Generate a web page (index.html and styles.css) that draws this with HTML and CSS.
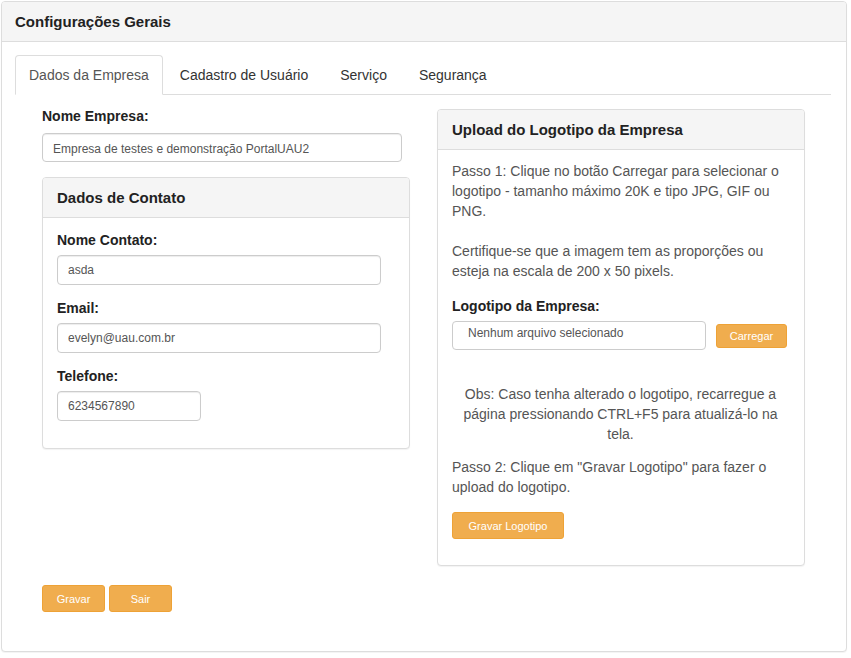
FILE: index.html
```html
<!DOCTYPE html>
<html lang="pt-BR">
<head>
<meta charset="utf-8">
<title>Configurações Gerais</title>
<link rel="stylesheet" href="styles.css">
</head>
<body>
<section class="panel main">
  <header class="panel-heading main-heading">
    <h1 class="panel-title">Configurações Gerais</h1>
  </header>
  <div class="main-body">
    <ul class="tabs">
      <li class="tab tab-active">Dados da Empresa</li>
      <li class="tab">Cadastro de Usuário</li>
      <li class="tab">Serviço</li>
      <li class="tab">Segurança</li>
    </ul>
    <div class="tab-content">
      <div class="columns">
        <div class="col">
          <label class="label">Nome Empresa:</label>
          <input class="field field-empresa" type="text" value="Empresa de testes e demonstração PortalUAU2">
          <section class="panel contato">
            <header class="panel-heading">
              <h2 class="panel-title">Dados de Contato</h2>
            </header>
            <div class="panel-body contato-body">
              <div class="form-group">
                <label class="label label-sm">Nome Contato:</label>
                <input class="field field-contato" type="text" value="asda">
              </div>
              <div class="form-group">
                <label class="label label-sm">Email:</label>
                <input class="field field-contato" type="text" value="evelyn@uau.com.br">
              </div>
              <div class="form-group">
                <label class="label label-sm">Telefone:</label>
                <input class="field field-fone" type="text" value="6234567890">
              </div>
            </div>
          </section>
        </div>
        <div class="col">
          <section class="panel upload">
            <header class="panel-heading">
              <h2 class="panel-title">Upload do Logotipo da Empresa</h2>
            </header>
            <div class="panel-body upload-body">
              <p class="text step1">Passo 1: Clique no botão Carregar para selecionar o logotipo - tamanho máximo 20K e tipo JPG, GIF ou PNG.<br><br>Certifique-se que a imagem tem as proporções ou esteja na escala de 200 x 50 pixels.</p>
              <label class="label label-sm">Logotipo da Empresa:</label>
              <div class="file-row">
                <div class="file-field">Nenhum arquivo selecionado</div>
                <button class="btn btn-carregar" type="button">Carregar</button>
              </div>
              <p class="text obs">Obs: Caso tenha alterado o logotipo, recarregue a página pressionando CTRL+F5 para atualizá-lo na tela.</p>
              <p class="text step2">Passo 2: Clique em "Gravar Logotipo" para fazer o upload do logotipo.</p>
              <button class="btn btn-logo" type="button">Gravar Logotipo</button>
            </div>
          </section>
        </div>
      </div>
      <div class="actions">
        <button class="btn btn-action" type="button">Gravar</button>
        <button class="btn btn-action" type="button">Sair</button>
      </div>
    </div>
  </div>
</section>
</body>
</html>
```
FILE: styles.css
```css
* {
  box-sizing: border-box;
}

body {
  margin: 0;
  padding: 1px;
  font-family: "Liberation Sans", Arial, sans-serif;
  font-size: 14px;
  line-height: 20px;
  color: #333;
  background: #fff;
}

.panel {
  background: #fff;
  border: 1px solid #ddd;
  border-radius: 4px;
  box-shadow: 0 1px 1px rgba(0, 0, 0, 0.05);
}

.main {
  width: 846px;
}

.panel-heading {
  background: #f5f5f5;
  border-bottom: 1px solid #ddd;
  border-radius: 3px 3px 0 0;
  padding: 10px 15px 9px 14px;
}

.main-heading {
  padding-left: 13px;
}

.panel-title {
  margin: 0;
  font-size: 15px;
  font-weight: bold;
  line-height: 20px;
  color: #222;
}

.main-body {
  padding: 13px 15px 39px 13px;
}

.tabs {
  display: flex;
  list-style: none;
  margin: 0;
  padding: 0;
  border-bottom: 1px solid #ddd;
}

.tab {
  margin: 0 2px -1px 0;
  padding: 9px 14px;
  border: 1px solid transparent;
  border-radius: 4px 4px 0 0;
  color: #333;
  line-height: 20px;
}

.tab-active {
  padding: 9px 13px;
  color: #555;
  background: #fff;
  border-color: #ddd #ddd transparent;
}

.tab-content {
  padding: 11px 26px 0 27px;
}

.columns {
  display: grid;
  grid-template-columns: 368px 368px;
  column-gap: 27px;
  align-items: start;
}

.label {
  display: block;
  font-weight: bold;
  color: #222;
  margin-bottom: 7px;
}

.label-sm {
  margin-bottom: 5px;
}

.field {
  display: block;
  height: 30px;
  padding: 0 10px;
  border: 1px solid #ccc;
  border-radius: 4px;
  box-shadow: inset 0 1px 1px rgba(0, 0, 0, 0.075);
  font-family: "Liberation Sans", Arial, sans-serif;
  font-size: 12px;
  color: #555;
  background: #fff;
  outline: none;
}

.field-empresa {
  width: 360px;
  height: 29px;
  padding-top: 2px;
  margin-bottom: 15px;
}

.contato-body {
  padding: 12px 15px 14px 14px;
}

.form-group {
  margin-bottom: 13px;
}

.field-contato {
  width: 324px;
}

.field-fone {
  width: 144px;
}

.upload {
  margin-top: 3px;
}

.upload-body {
  padding: 11px 15px 26px 14px;
}

.text {
  margin: 0;
  color: #555;
}

.step1 {
  margin-bottom: 15px;
}

.file-row {
  display: flex;
  align-items: center;
  gap: 10px;
}

.file-field {
  width: 254px;
  height: 29px;
  padding: 3px 15px 0;
  border: 1px solid #ccc;
  border-radius: 4px;
  font-size: 12px;
  line-height: 16px;
  color: #555;
}

.obs {
  margin-top: 34px;
  text-align: center;
}

.step2 {
  margin-top: 13px;
}

.btn {
  display: block;
  margin: 0;
  border: 1px solid #eea236;
  border-radius: 3px;
  background: #f0ad4e;
  color: #fff;
  font-family: "Liberation Sans", Arial, sans-serif;
  font-size: 11px;
  line-height: 14px;
  padding: 0;
  cursor: pointer;
}

.btn-carregar {
  width: 71px;
  height: 24px;
}

.btn-logo {
  margin-top: 15px;
  width: 112px;
  height: 27px;
}

.actions {
  display: flex;
  gap: 4px;
  margin-top: 19px;
}

.btn-action {
  width: 63px;
  height: 27px;
}
```
